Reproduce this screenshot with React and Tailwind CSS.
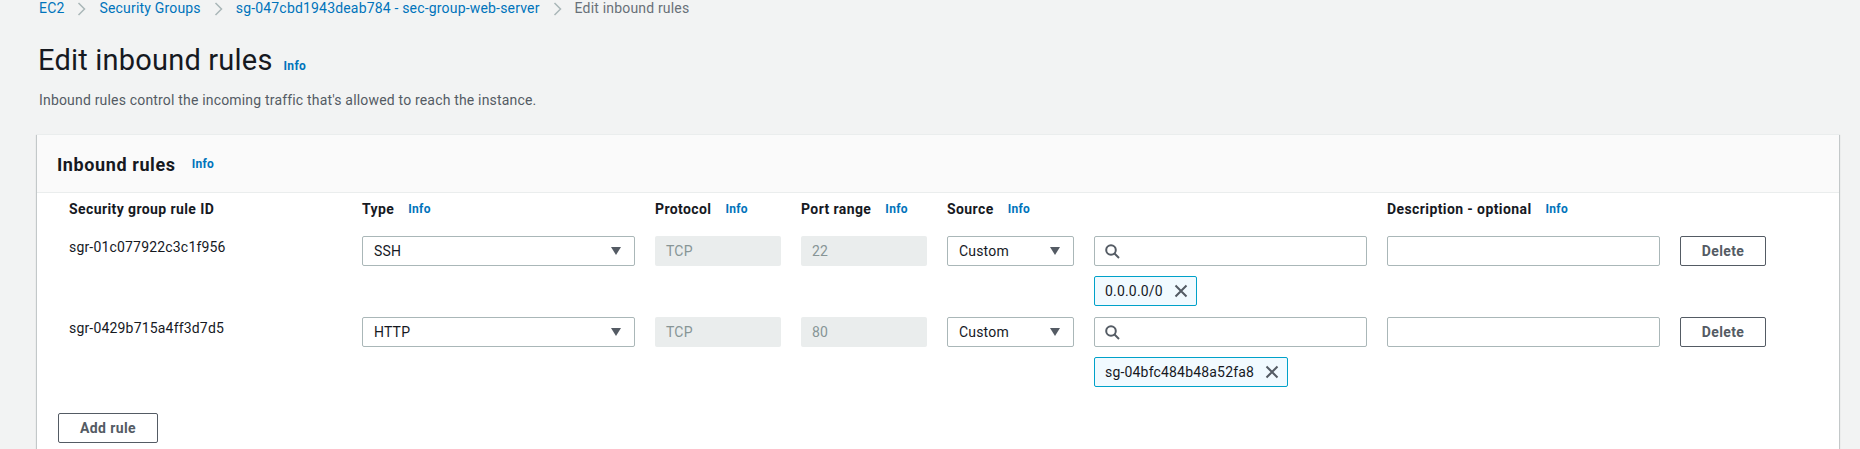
import React from 'react'

const COLS = 'grid grid-cols-[273px_273px_126px_126px_127px_273px_273px_86px] gap-x-5'

const rules = [
  { id: 'sgr-01c077922c3c1f956', type: 'SSH', port: '22', token: '0.0.0.0/0' },
  { id: 'sgr-0429b715a4ff3d7d5', type: 'HTTP', port: '80', token: 'sg-04bfc484b48a52fa8' },
]

function Chevron() {
  return (
    <svg width="9" height="14" viewBox="0 0 9 14" className="mx-[13px] mt-[1px]">
      <polyline points="1.5,1 7.5,7 1.5,13" fill="none" stroke="#aab7b8" strokeWidth="1.5" />
    </svg>
  )
}

function Caret() {
  return (
    <svg width="10" height="8" viewBox="0 0 10 8">
      <polygon points="0,0 10,0 5,8" fill="#545b64" />
    </svg>
  )
}

function Info({ className = '' }) {
  return <span className={`text-[12px] font-bold tracking-[0.3px] text-[#0073bb] ${className}`}>Info</span>
}

function Label({ children }) {
  return (
    <div className="flex items-center leading-5">
      <span className="text-[14px] font-bold tracking-[0.4px] text-[#16191f]">{children}</span>
      <Info className="ml-[14px]" />
    </div>
  )
}

function Select({ value }) {
  return (
    <div className="h-[30px] flex items-center justify-between border border-[#aab7b8] rounded-[2px] bg-white pl-[11px] pr-[13px]">
      <span className="text-[14px] text-[#16191f]">{value}</span>
      <Caret />
    </div>
  )
}

function Disabled({ value }) {
  return (
    <div className="h-[30px] flex items-center rounded-[2px] bg-[#eaeded] px-[11px] text-[14px] text-[#879596]">
      {value}
    </div>
  )
}

function Token({ label }) {
  return (
    <div className="h-[30px] self-start flex items-center border border-[#00a1c9] rounded-[2px] bg-[#f1faff] pl-[10px] pr-[8px]">
      <span className="text-[14px] text-[#16191f]">{label}</span>
      <svg width="14" height="14" viewBox="0 0 14 14" className="ml-[11px]">
        <path d="M1.5 1.5 L12.5 12.5 M12.5 1.5 L1.5 12.5" stroke="#545b64" strokeWidth="2" fill="none" />
      </svg>
    </div>
  )
}

export default function App() {
  return (
    <div className="min-h-[449px] bg-[#f2f3f3] pl-[37px] pr-[21px] font-['Roboto',sans-serif] tracking-[0.18px] overflow-hidden">
      {/* breadcrumb */}
      <div className="h-[17px] pl-[2px] flex items-center text-[14px] leading-[17px]">
        <span className="text-[#0073bb]">EC2</span>
        <Chevron />
        <span className="text-[#0073bb]">Security Groups</span>
        <Chevron />
        <span className="text-[#0073bb]">sg-047cbd1943deab784 - sec-group-web-server</span>
        <Chevron />
        <span className="text-[#687078]">Edit inbound rules</span>
      </div>

      <div className="mt-[26px] pl-[1px] flex items-baseline">
        <h1 className="text-[29px] leading-[34px] tracking-[0.2px] text-[#16191f]">Edit inbound rules</h1>
        <Info className="ml-[11px]" />
      </div>
      <p className="mt-[13px] pl-[2px] text-[14px] leading-5 text-[#545b64]">
        Inbound rules control the incoming traffic that's allowed to reach the instance.
      </p>

      {/* panel */}
      <div className="mt-[24px] bg-white border-t border-[#eaeded] shadow-[0_1px_1px_0_rgba(0,28,36,0.3),1px_1px_1px_0_rgba(0,28,36,0.15),-1px_1px_1px_0_rgba(0,28,36,0.15)] pb-6">
        <div className="h-[58px] bg-[#fafafa] border-b border-[#eaeded] pl-5 pt-[1px] flex items-center">
          <h2 className="text-[18px] font-bold tracking-[0.6px] text-[#16191f]">Inbound rules</h2>
          <Info className="ml-4" />
        </div>

        <div className="pl-[32px] pt-[6px]">
          <div className={COLS}>
            <div className="text-[14px] font-bold tracking-[0.4px] text-[#16191f] leading-5">Security group rule ID</div>
            <Label>Type</Label>
            <Label>Protocol</Label>
            <Label>Port range</Label>
            <Label>Source</Label>
            <div />
            <Label>Description - optional</Label>
            <div />
          </div>

          <div className="mt-[17px] flex flex-col gap-[11px]">
            {rules.map((r) => (
              <div key={r.id} className={COLS}>
                <div className="pt-[1px] text-[14px] leading-5 text-[#16191f]">{r.id}</div>
                <div><Select value={r.type} /></div>
                <div><Disabled value="TCP" /></div>
                <div><Disabled value={r.port} /></div>
                <div><Select value="Custom" /></div>
                <div className="flex flex-col gap-[10px]">
                  <div className="h-[30px] flex items-center border border-[#aab7b8] rounded-[2px] bg-white pl-[10px]">
                    <svg width="15" height="15" viewBox="0 0 15 15">
                      <circle cx="6" cy="6" r="4.8" fill="none" stroke="#545b64" strokeWidth="2" />
                      <line x1="9.5" y1="9.5" x2="14" y2="14" stroke="#545b64" strokeWidth="2" />
                    </svg>
                  </div>
                  <Token label={r.token} />
                </div>
                <div><div className="h-[30px] border border-[#aab7b8] rounded-[2px] bg-white" /></div>
                <div>
                  <button className="w-[86px] h-[30px] border border-[#545b64] rounded-[2px] bg-white text-[14px] font-bold tracking-[0.4px] text-[#545b64]">
                    Delete
                  </button>
                </div>
              </div>
            ))}
          </div>
        </div>

        <div className="pl-[21px] mt-[26px]">
          <button className="w-[100px] h-[30px] border border-[#545b64] rounded-[2px] bg-white text-[14px] font-bold tracking-[0.4px] text-[#545b64]">
            Add rule
          </button>
        </div>
      </div>
    </div>
  )
}
